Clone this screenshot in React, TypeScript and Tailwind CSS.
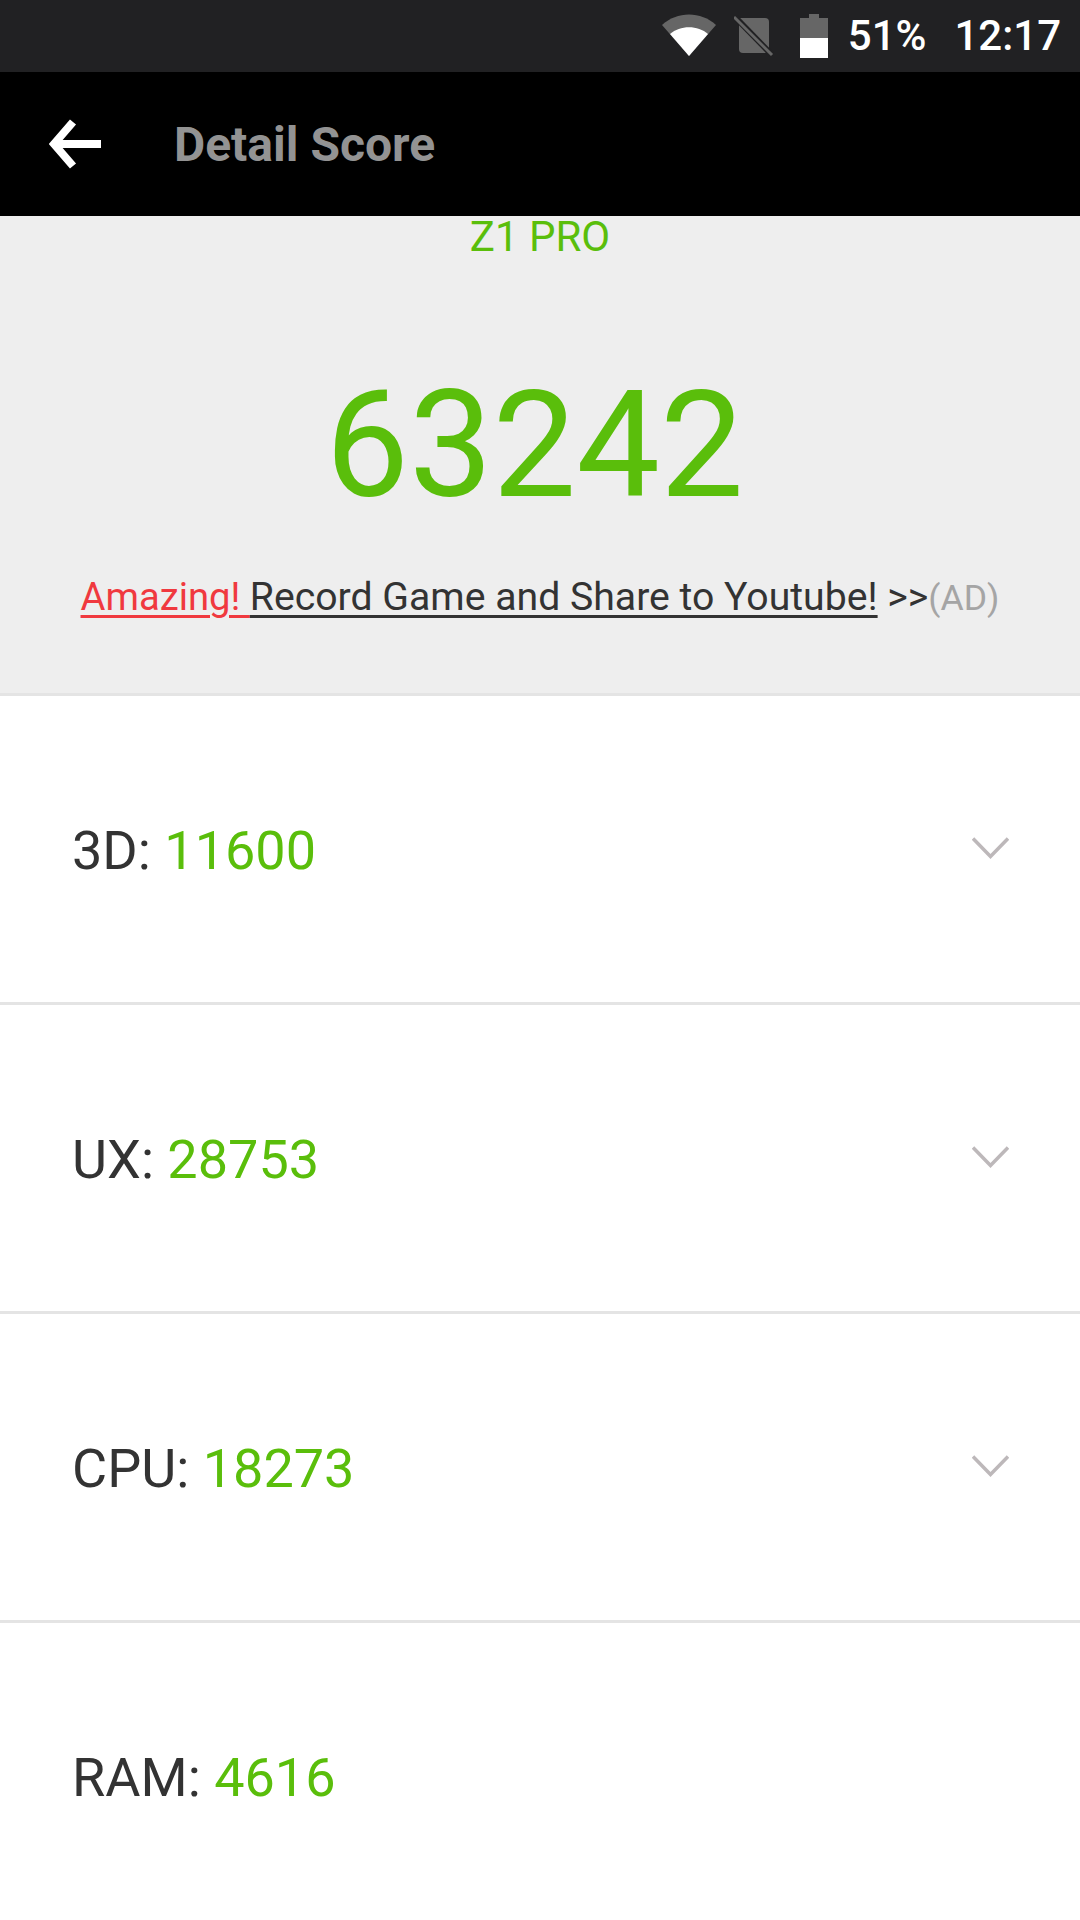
const font = { fontFamily: "Roboto, sans-serif" };

function Row({ label, score, arrow = true }: { label: string; score: string; arrow?: boolean }) {
  return (
    <div className="h-[309px] shrink-0 border-b-[3px] border-[#e4e4e4] bg-white flex items-center justify-between pt-[3px] pl-[72px] pr-[71px]">
      <div className="text-[54px] leading-none text-[#333333]">
        {label}: <span className="text-[#5abe0b]">{score}</span>
      </div>
      {arrow && (
        <svg width="37" height="22" viewBox="0 0 37 22" fill="none" stroke="#bdb8ba" strokeWidth="3.5" className="mb-[6px]">
          <path d="M1 1.5 L18.5 19.5 L36 1.5" />
        </svg>
      )}
    </div>
  );
}

export default function App() {
  return (
    <div className="w-[1080px] h-[1920px] overflow-hidden flex flex-col bg-white" style={font}>
      {/* status bar */}
      <div className="h-[72px] shrink-0 bg-[#212123] flex items-center justify-end pr-[19px] text-white">
        <svg width="54" height="44" viewBox="0 0 54 44" className="mr-[18px]">
          <path d="M0 11 C15 -3 39 -3 54 11 L27 42 Z" fill="#666666" />
          <path d="M8 20 C18 11 36 11 46 20 L27 42 Z" fill="#ffffff" />
        </svg>
        <svg width="40" height="42" viewBox="0 0 40 42" className="mr-[26px]">
          <path d="M5 3 H31 Q35 3 35 7 V34 Q35 38 31 38 H9 Q5 38 5 34 Z" fill="#666666" />
          <path d="M1 2 L38 40" stroke="#212123" strokeWidth="6" />
          <path d="M0 2 L38 40" stroke="#666666" strokeWidth="3" />
        </svg>
        <svg width="28" height="44" viewBox="0 0 28 44" className="mr-[20px]">
          <path d="M9 0 H19 V4 H28 V24 H0 V4 H9 Z" fill="#666666" />
          <rect x="0" y="24" width="28" height="20" fill="#ffffff" />
        </svg>
        <span className="text-[42px] leading-none font-medium mr-[28px]">51%</span>
        <span className="text-[42px] leading-none font-medium">12:17</span>
      </div>

      {/* header */}
      <div className="h-[144px] shrink-0 bg-black flex items-center">
        <svg width="52" height="50" viewBox="0 0 52 50" fill="none" stroke="#ffffff" strokeWidth="8" className="ml-[49px]">
          <path d="M24 3 L5 25 L24 47" />
          <path d="M6 25 H52" />
        </svg>
        <span className="ml-[73px] pt-[2px] text-[48px] leading-none font-bold text-[#939393]">Detail Score</span>
      </div>

      {/* score */}
      <div className="h-[480px] shrink-0 bg-[#eeeeee] border-b-[3px] border-[#e4e4e4] flex flex-col items-center">
        <div className="text-[42px] leading-none text-[#5abe0b]">Z1 PRO</div>
        <div className="text-[149px] leading-none text-[#5abe0b] mt-[113px] -ml-[11px]">63242</div>
        <div className="text-[39.2px] leading-none mt-[58px] text-[#333333] whitespace-nowrap">
          <span className="underline underline-offset-[5px] decoration-[3px] text-[#f0393f] text-[38.2px]">Amazing! </span>
          <span className="underline underline-offset-[5px] decoration-[3px]">Record Game and Share to Youtube!</span>{" "}
          &gt;&gt;<span className="text-[#a5a5a5] text-[35.6px]">(AD)</span>
        </div>
      </div>

      <Row label="3D" score="11600" />
      <Row label="UX" score="28753" />
      <Row label="CPU" score="18273" />
      <Row label="RAM" score="4616" arrow={false} />
    </div>
  );
}
